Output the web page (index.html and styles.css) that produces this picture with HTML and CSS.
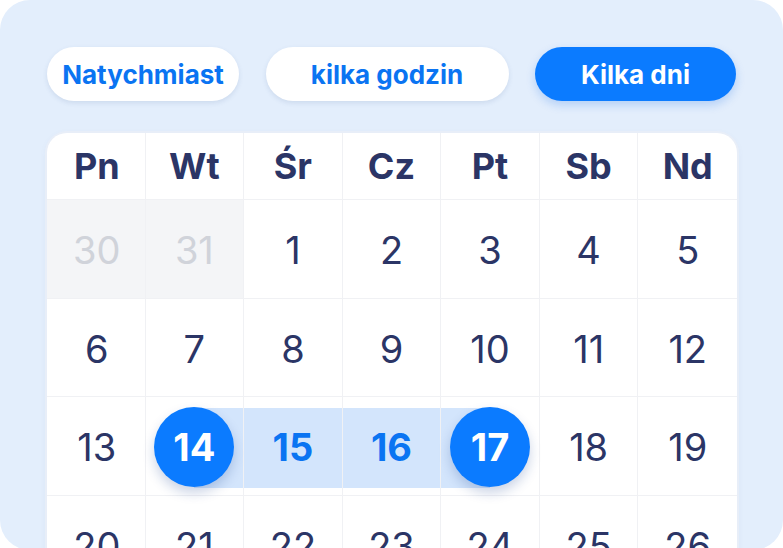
FILE: index.html
```html
<!DOCTYPE html>
<html lang="pl">
<head>
<meta charset="utf-8">
<title>Kalendarz</title>
<link rel="stylesheet" href="styles.css">
</head>
<body>
<div class="panel">
  <div class="pills">
    <div class="pill">Natychmiast</div>
    <div class="pill">kilka godzin</div>
    <div class="pill active">Kilka dni</div>
  </div>
  <div class="card">
    <div class="head">Pn</div>
    <div class="head">Wt</div>
    <div class="head">Śr</div>
    <div class="head">Cz</div>
    <div class="head">Pt</div>
    <div class="head">Sb</div>
    <div class="head last">Nd</div>

    <div class="day muted">30</div>
    <div class="day muted">31</div>
    <div class="day">1</div>
    <div class="day">2</div>
    <div class="day">3</div>
    <div class="day">4</div>
    <div class="day last">5</div>

    <div class="day">6</div>
    <div class="day">7</div>
    <div class="day">8</div>
    <div class="day">9</div>
    <div class="day">10</div>
    <div class="day">11</div>
    <div class="day last">12</div>

    <div class="day">13</div>
    <div class="day range-start"><span class="dot">14</span></div>
    <div class="day range-mid"><span class="num">15</span></div>
    <div class="day range-mid"><span class="num">16</span></div>
    <div class="day range-end"><span class="dot">17</span></div>
    <div class="day">18</div>
    <div class="day last">19</div>

    <div class="day">20</div>
    <div class="day">21</div>
    <div class="day">22</div>
    <div class="day">23</div>
    <div class="day">24</div>
    <div class="day">25</div>
    <div class="day last">26</div>
  </div>
</div>
</body>
</html>
```

FILE: styles.css
```css
* { box-sizing: border-box; }

html, body {
  margin: 0;
  padding: 0;
  background: #ffffff;
  overflow: hidden;
}

body {
  font-family: "Inter", "Liberation Sans", sans-serif;
  width: 783px;
  height: 548px;
}

.panel {
  width: 783px;
  height: 550px;
  background: #e3eefc;
  border-radius: 30px;
  padding: 47px 46px 0 47px;
  overflow: hidden;
}

.pills {
  display: flex;
  justify-content: space-between;
  width: 689px;
  height: 54px;
}

.pill {
  height: 54px;
  border-radius: 27px;
  background: #ffffff;
  color: #0a74f2;
  font-weight: 700;
  font-size: 26px;
  display: flex;
  align-items: center;
  justify-content: center;
  box-shadow: 0 2px 5px rgba(40, 70, 130, 0.12);
}

.pill:nth-child(1) { width: 192px; }
.pill:nth-child(2) { width: 243px; }
.pill:nth-child(3) { width: 201px; }

.pill.active {
  background: #0b7bff;
  color: #ffffff;
  box-shadow: 0 4px 10px rgba(11, 100, 230, 0.22);
}

.card {
  margin-top: 32px;
  width: 690px;
  background: #ffffff;
  border-radius: 20px 20px 0 0;
  box-shadow: 0 0 0 2px #e8eef8, 0 2px 8px rgba(40, 70, 130, 0.06);
  display: grid;
  grid-template-columns: repeat(7, 1fr);
  overflow: hidden;
}

.head,
.day {
  display: flex;
  align-items: center;
  justify-content: center;
  color: #2b3566;
  border-right: 1.5px solid #f0f1f4;
  border-bottom: 1.5px solid #f0f1f4;
  position: relative;
}

.head:first-child,
.day:nth-child(7n+1) { padding-left: 2px; }

.head {
  height: 67px;
  font-weight: 700;
  font-size: 36px;
}

.day {
  height: 98.5px;
  font-weight: 400;
  font-size: 38px;
  padding-top: 3px;
}

.last { border-right: none; }

.muted {
  background: #f4f5f7;
  color: #d0d3da;
}

.range-start::before,
.range-mid::before,
.range-end::before {
  content: "";
  position: absolute;
  top: 50%;
  height: 80px;
  margin-top: -38px;
  background: #d3e5fc;
}

.range-start::before { left: 50%; right: 0; }
.range-mid::before { left: 0; right: 0; }
.range-end::before { left: 0; right: 50%; }

.num {
  position: relative;
  color: #0a74f2;
  font-weight: 700;
}

.dot {
  position: relative;
  width: 80px;
  height: 80px;
  border-radius: 50%;
  background: #0b7bff;
  color: #ffffff;
  font-weight: 700;
  display: flex;
  align-items: center;
  justify-content: center;
  box-shadow: 0 6px 12px rgba(20, 60, 140, 0.22);
}
```
